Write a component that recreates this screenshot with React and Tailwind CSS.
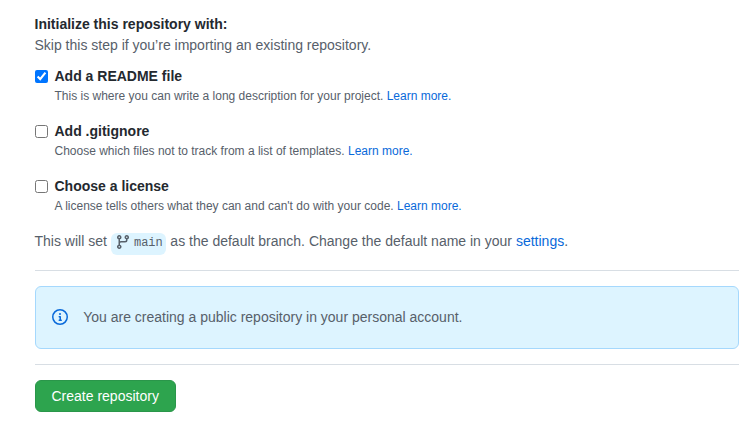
function Option({ title, note, checked, className }) {
  return (
    <div className={`flex items-start ${className}`}>
      <input
        type="checkbox"
        defaultChecked={checked}
        className="mt-1 mr-[7px] h-[13px] w-[13px] shrink-0"
      />
      <div>
        <div className="text-sm leading-[21px] font-semibold text-[#24292f]">{title}</div>
        <p className="text-xs leading-[18px]">
          {note} <a className="text-[#0969da]">Learn more.</a>
        </p>
      </div>
    </div>
  );
}

export default function App() {
  return (
    <main className="h-[436px] w-[741px] bg-white pt-[14px] pr-[2px] pl-[34.5px] font-['Liberation_Sans',Arial,sans-serif] text-sm leading-[21px] text-[#57606a]">
      <h2 className="font-semibold text-[#24292f]">Initialize this repository with:</h2>
      <p>Skip this step if you’re importing an existing repository.</p>
      <Option
        className="mt-[10px]"
        title="Add a README file"
        note="This is where you can write a long description for your project."
        checked
      />
      <Option
        className="mt-4"
        title="Add .gitignore"
        note="Choose which files not to track from a list of templates."
      />
      <Option
        className="mt-4"
        title="Choose a license"
        note="A license tells others what they can and can't do with your code."
      />
      <p className="mt-4 flex h-[21px] items-center">
        <span>This will set</span>
        <span className="mt-[5px] mr-[4.5px] ml-[4px] flex h-[22px] w-[55px] shrink-0 items-center rounded-md bg-[#ddf4ff] pl-[4.5px] font-['Liberation_Mono',monospace] text-xs">
          <svg width="16" height="16" viewBox="0 0 16 16" fill="currentColor" className="mr-[2.6px] mb-[5px] shrink-0">
            <path
              fillRule="evenodd"
              d="M11.75 2.5a.75.75 0 100 1.5.75.75 0 000-1.5zm-2.25.75a2.25 2.25 0 113 2.122V6A2.5 2.5 0 0110 8.5H6a1 1 0 00-1 1v1.128a2.251 2.251 0 11-1.5 0V5.372a2.25 2.25 0 111.5 0v1.836A2.492 2.492 0 016 7h4a1 1 0 001-1v-.628A2.25 2.25 0 019.5 3.25zM4.25 12a.75.75 0 100 1.5.75.75 0 000-1.5zM3.5 3.25a.75.75 0 111.5 0 .75.75 0 01-1.5 0z"
            />
          </svg>
          <span className="mb-[3px]">main</span>
        </span>
        <span>
          as the default branch. Change the default name in your{" "}
          <a className="text-[#0969da]">settings</a>.
        </span>
      </p>
      <hr className="mt-[18px] border-[#d8dee4]" />
      <div className="mt-[15px] flex h-[63px] items-center rounded-md border border-[#a5d8fd] bg-[#ddf4ff] pl-4">
        <svg width="16" height="16" viewBox="0 0 16 16" className="mr-[15.7px] mb-px fill-[#0969da]">
          <path
            fillRule="evenodd"
            d="M8 1.5a6.5 6.5 0 100 13 6.5 6.5 0 000-13zM0 8a8 8 0 1116 0A8 8 0 010 8zm6.5-.25A.75.75 0 017.25 7h1a.75.75 0 01.75.75v2.75h.25a.75.75 0 010 1.5h-2a.75.75 0 010-1.5h.25v-2h-.25a.75.75 0 01-.75-.75zM8 6a1 1 0 100-2 1 1 0 000 2z"
          />
        </svg>
        You are creating a public repository in your personal account.
      </div>
      <hr className="mt-[15px] border-[#d8dee4]" />
      <button className="mt-[15px] flex h-8 w-[141.4px] items-center justify-center rounded-md border border-[#2a964a] bg-[#2da44e] text-white">
        Create repository
      </button>
    </main>
  );
}
